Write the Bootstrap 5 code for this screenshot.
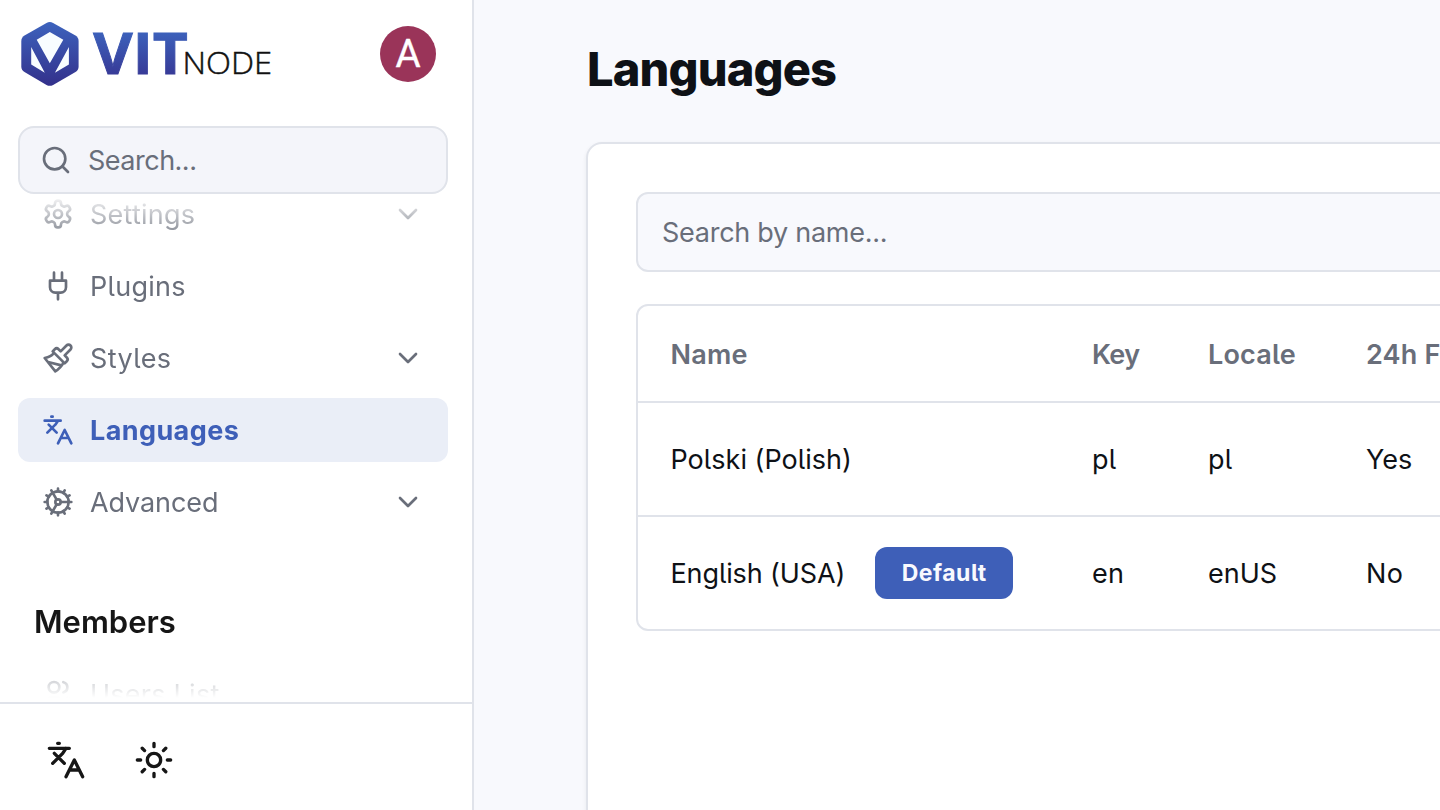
<!DOCTYPE html>
<html lang="en">
<head>
<meta charset="utf-8">
<meta name="viewport" content="width=device-width, initial-scale=1">
<title>Languages - VitNode</title>
<link href="https://cdn.jsdelivr.net/npm/bootstrap@5.3.0/dist/css/bootstrap.min.css" rel="stylesheet">
<style>
:root { --line: #e0e3ea; --ink: #0e1116; --soft: #696e7a; --brand: #3e5fb8; }
body { font-family: Inter, "Liberation Sans", sans-serif; font-size: 27px; line-height: 40px; font-feature-settings: "cv05"; color: var(--ink); background: #f8f9fd; }
.ico { width: 32px; height: 32px; flex: none; fill: none; stroke: currentColor; stroke-width: 2; stroke-linecap: round; stroke-linejoin: round; }
.ico-lg { width: 40px; height: 40px; }
.sidebar { width: 474px; border-right: 2px solid var(--line); }
.brand-row { height: 126px; padding: 20px 36px 0 20px; }
.avatar { width: 56px; height: 56px; margin-top: 6px; background: #9a3459; font: 400 38.5px/56px Roboto, sans-serif; -webkit-text-stroke: .4px #fff; }
.side-search { height: 68px; margin: 0 24px 0 18px; padding: 2px 20px 0; gap: 16px; border: 2px solid var(--line); border-radius: 16px; background: #f4f5fa; color: var(--soft); letter-spacing: -.5px; }
.side-search .ico { margin-top: -2px; }
.side-scroll { height: 508px; padding: 0 24px 0 18px;
  -webkit-mask-image: linear-gradient(transparent, #000 50px, #000 444px, transparent 504px);
  mask-image: linear-gradient(transparent, #000 50px, #000 444px, transparent 504px); }
.side-menu { gap: 8px; margin-top: -12px; }
.side-item { height: 64px; flex: none; padding: 0 24px; gap: 16px; border-radius: 12px; color: var(--soft); text-decoration: none; }
.side-item span { padding-top: 2px; }
.side-item.active { background: #eaeef7; color: var(--brand); font-weight: 700; }
.side-head { font-size: 31px; font-weight: 600; color: #161616; padding-left: 16px; height: 40px; margin: 68px 0 20px; }
.side-foot { border-top: 2px solid var(--line); padding: 20px 30px 14px; gap: 16px; color: #161616; }
.tool { width: 72px; height: 72px; padding: 0; border: 0; color: inherit; }
.page { padding: 41px 0 0 112px; }
.page-title { font-size: 47px; line-height: 56px; font-weight: 800; margin: 0 0 45px; padding-left: 1px; letter-spacing: -.85px; }
.panel { width: 1100px; height: 760px; border: 2px solid var(--line); border-radius: 16px; padding: 48px; }
.field { height: 80px; border: 2px solid var(--line); border-radius: 12px; background: #f8f9fd; color: var(--soft); padding: 0 24px; font-size: 27px; letter-spacing: -.27px; margin-bottom: 32px; }
.field::placeholder { color: var(--soft); opacity: 1; }
.grid-box { border: 2px solid var(--line); border-radius: 12px; }
.grid-box table { table-layout: fixed; border-collapse: separate; border-spacing: 0; margin: 0; color: var(--ink); --bs-table-bg: transparent; }
.grid-box tr > * { padding: 1px 0 0 32px; white-space: nowrap; border: 0; vertical-align: middle; }
.grid-box tr > :first-child { padding-left: 32.5px; }
.grid-box th { height: 95px; padding-top: 2px; color: var(--soft); font-weight: 600; letter-spacing: .2px; }
.grid-box td { height: 114px; border-top: 2px solid var(--line); letter-spacing: .02px; }
.tag { width: 138px; height: 52px; margin: -2px 0 0 30px; border-radius: 12px; background: var(--brand); color: #f8f9fe; font-size: 23px; font-weight: 700; letter-spacing: .5px; }
.l-a { letter-spacing: .25px; } .l-b { letter-spacing: .4px; } .l-c { letter-spacing: .4px; } .l-d { letter-spacing: -.1px; } .l-n { letter-spacing: -.12px; }
.grid-box .l-k { letter-spacing: -.6px; } .grid-box .l-w { letter-spacing: .3px; }
</style>
</head>
<body class="vh-100 overflow-hidden">
<svg class="d-none">
  <symbol id="chev" viewBox="0 0 24 24"><path d="m6 9 6 6 6-6"/></symbol>
  <symbol id="lang" viewBox="0 0 24 24"><path d="m5 8 6 6M4 14l6-6 2-3M2 5h12M7 2h1m14 20-5-10-5 10M14 18h6"/></symbol>
</svg>
<div class="d-flex vh-100">
  <aside class="sidebar bg-white d-flex flex-column flex-shrink-0">
    <div class="brand-row d-flex justify-content-between align-items-start flex-shrink-0">
      <svg width="254" height="68" viewBox="20 20 254 68" overflow="visible" role="img" aria-label="VitNode">
        <defs><linearGradient id="g" gradientUnits="userSpaceOnUse" x1="0" y1="22" x2="0" y2="86"><stop stop-color="#3d63bd"/><stop offset="1" stop-color="#33308b"/></linearGradient>
        <linearGradient id="t" gradientUnits="userSpaceOnUse" x1="0" y1="33" x2="0" y2="75"><stop stop-color="#3c60ba"/><stop offset="1" stop-color="#373a97"/></linearGradient></defs>
        <path fill="url(#g)" d="M46.500 22.900Q49.800 21.100 53.100 22.900L75.500 35.500Q78.600 37.500 78.600 41V66.500Q78.600 70 75.500 72L53.100 84.900Q49.800 86.700 46.500 84.900L24.500 72Q21.300 70 21.300 66.500V41Q21.300 37.500 24.500 35.500Z"/>
        <path fill="#f8fdff" d="M49.800 32 63.300 39.800 49.800 63.300 36.700 39.800ZM31.200 47 44.800 72.700 31.200 64.600ZM68.900 47V64.600L54.900 72.700Z"/>
        <text x="93.300" y="74.200" font-family="Open Sans" font-size="57.500" font-weight="700" fill="url(#t)" stroke="url(#t)" stroke-width=".9" textLength="94.500" lengthAdjust="spacingAndGlyphs">VIT</text>
        <text x="182.600" y="74.200" font-family="Open Sans" font-size="31.500" font-weight="300" fill="#111" stroke="#111" stroke-width=".5" textLength="89.500" lengthAdjust="spacingAndGlyphs">NODE</text>
      </svg>
      <div class="avatar rounded-circle text-white text-center">A</div>
    </div>
    <div class="side-search d-flex align-items-center flex-shrink-0">
      <svg class="ico" viewBox="0 0 24 24"><circle cx="11" cy="11" r="8"/><path d="m21 21-4.300-4.300"/></svg><span>Search...</span>
    </div>
    <div class="side-scroll overflow-hidden flex-shrink-0">
      <nav class="side-menu d-flex flex-column">
        <a class="side-item d-flex align-items-center" href="#"><svg class="ico" viewBox="0 0 24 24"><path d="M12.220 2h-.44a2 2 0 0 0-2 2v.18a2 2 0 0 1-1 1.730l-.43.25a2 2 0 0 1-2 0l-.15-.08a2 2 0 0 0-2.730.73l-.22.38a2 2 0 0 0 .73 2.730l.15.1a2 2 0 0 1 1 1.720v.51a2 2 0 0 1-1 1.740l-.15.09a2 2 0 0 0-.73 2.730l.22.38a2 2 0 0 0 2.730.73l.15-.08a2 2 0 0 1 2 0l.43.25a2 2 0 0 1 1 1.730V20a2 2 0 0 0 2 2h.44a2 2 0 0 0 2-2v-.18a2 2 0 0 1 1-1.730l.43-.25a2 2 0 0 1 2 0l.15.08a2 2 0 0 0 2.730-.73l.22-.39a2 2 0 0 0-.73-2.730l-.15-.08a2 2 0 0 1-1-1.740v-.5a2 2 0 0 1 1-1.740l.15-.09a2 2 0 0 0 .73-2.730l-.22-.38a2 2 0 0 0-2.730-.73l-.15.08a2 2 0 0 1-2 0l-.43-.25a2 2 0 0 1-1-1.730V4a2 2 0 0 0-2-2z"/><circle cx="12" cy="12" r="3"/></svg><span class="l-a">Settings</span><svg class="ico ms-auto"><use href="#chev"/></svg></a>
        <a class="side-item d-flex align-items-center" href="#"><svg class="ico" viewBox="0 0 24 24"><path d="M12 22v-5M9 8V2M15 8V2M18 8v5a4 4 0 0 1-4 4h-4a4 4 0 0 1-4-4V8Z"/></svg><span class="l-a">Plugins</span></a>
        <a class="side-item d-flex align-items-center" href="#"><svg class="ico" viewBox="0 0 24 24"><path d="M18.370 2.630 14 7l-1.590-1.590a2 2 0 0 0-2.820 0L8 7l9 9 1.590-1.590a2 2 0 0 0 0-2.820L17 10l4.370-4.370a2.120 2.120 0 1 0-3-3ZM9 8c-2 3-4 3.500-7 4l8 10c2-1 6-5 6-7M14.500 17.500 4.500 15"/></svg><span class="l-b">Styles</span><svg class="ico ms-auto"><use href="#chev"/></svg></a>
        <a class="side-item active d-flex align-items-center" href="#"><svg class="ico"><use href="#lang"/></svg><span class="l-c">Languages</span></a>
        <a class="side-item d-flex align-items-center" href="#"><svg class="ico" viewBox="0 0 24 24"><circle cx="12" cy="12" r="8"/><circle cx="12" cy="12" r="2"/><path d="M12 2v2M12 22v-2M17 20.660l-1-1.730M11 10.270 7 3.340M20.660 17l-1.730-1M3.340 7l1.730 1M14 12h8M2 12h2M20.660 7l-1.730 1M3.340 17l1.730-1M17 3.340l-1 1.730M11 13.730l-4 6.930"/></svg><span class="l-d">Advanced</span><svg class="ico ms-auto"><use href="#chev"/></svg></a>
      </nav>
      <div class="side-head">Members</div>
      <a class="side-item d-flex align-items-center" href="#"><svg class="ico" viewBox="0 0 24 24"><path d="M16 21v-2a4 4 0 0 0-4-4H6a4 4 0 0 0-4 4v2"/><circle cx="9" cy="7" r="4"/><path d="M22 21v-2a4 4 0 0 0-3-3.870M16 3.130a4 4 0 0 1 0 7.750"/></svg><span class="l-a">Users List</span></a>
    </div>
    <div class="side-foot d-flex flex-shrink-0">
      <button class="tool btn d-flex align-items-center justify-content-center" aria-label="Language"><svg class="ico ico-lg"><use href="#lang"/></svg></button>
      <button class="tool btn d-flex align-items-center justify-content-center" aria-label="Theme"><svg class="ico ico-lg" viewBox="0 0 24 24"><circle cx="12" cy="12" r="4"/><path d="M12 2v2M12 20v2M4.930 4.930l1.410 1.410M17.660 17.660l1.410 1.410M2 12h2M20 12h2M6.340 17.660l-1.410 1.410M19.070 4.930l-1.410 1.410"/></svg></button>
    </div>
  </aside>
  <main class="page flex-grow-1 overflow-hidden">
    <h1 class="page-title">Languages</h1>
    <section class="panel bg-white shadow-sm">
      <input class="field form-control" placeholder="Search by name...">
      <div class="grid-box">
        <table class="table">
          <colgroup><col style="width:422px"><col style="width:116px"><col style="width:158px"><col></colgroup>
          <thead><tr><th>Name</th><th class="l-k">Key</th><th>Locale</th><th>24h Format</th></tr></thead>
          <tbody>
            <tr><td>Polski (Polish)</td><td class="l-w">pl</td><td class="l-w">pl</td><td>Yes</td></tr>
            <tr><td><div class="d-flex align-items-center"><span class="l-n">English (USA)</span><span class="tag d-flex align-items-center justify-content-center">Default</span></div></td><td class="l-w">en</td><td>enUS</td><td class="l-w">No</td></tr>
          </tbody>
        </table>
      </div>
    </section>
  </main>
</div>
<script src="https://cdn.jsdelivr.net/npm/bootstrap@5.3.0/dist/js/bootstrap.bundle.min.js"></script>
</body>
</html>
